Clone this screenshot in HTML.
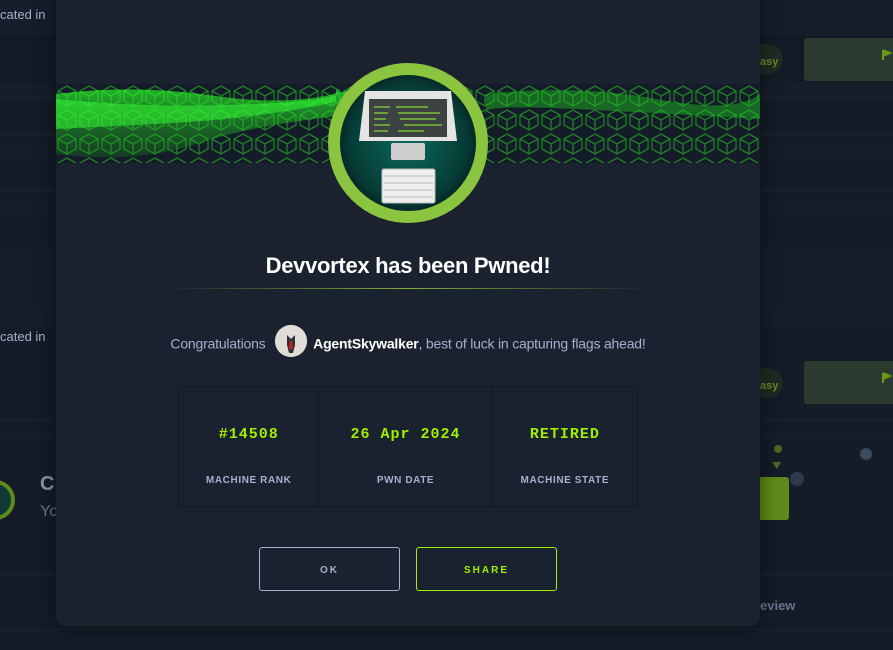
<!DOCTYPE html>
<html><head><meta charset="utf-8"><style>
*{margin:0;padding:0;box-sizing:border-box}
body{width:893px;height:650px;overflow:hidden;background:#151c28;font-family:"Liberation Sans",sans-serif;position:relative}
.bg{position:absolute;left:0;top:0;width:893px;height:650px}
.modal{position:absolute;left:56px;top:0;width:704px;height:626px;background:#1a2230;border-radius:0 0 10px 10px;box-shadow:0 0 20px rgba(0,0,0,.5);overflow:hidden}
.banner{position:absolute;left:0;top:84px;width:704px;height:79px;background:#151c29}
h1{position:absolute;top:253px;width:100%;text-align:center;color:#fff;font-size:22px;font-weight:bold;letter-spacing:-0.3px}
.line{position:absolute;left:109px;top:288px;width:486px;height:1px;background:linear-gradient(90deg,transparent,#7fae3a 50%,transparent)}
.cg{position:absolute;top:333px;width:100%;text-align:center;color:#a4b1cd;font-size:14px;letter-spacing:-0.2px}
.cg b{color:#fff}
.av{display:inline-block;width:32px;height:32px;border-radius:50%;background:#ddd;vertical-align:middle;margin:-8px 6px 0 6px;position:relative;overflow:hidden}
.tbl{position:absolute;left:122px;top:386px;width:460px;height:121px;border:1px solid #111826;display:flex}
.c{border-right:1px solid #111826;text-align:center;position:relative}
.c:last-child{border-right:0}
.v{position:absolute;top:39px;width:100%;color:#9fef00;font-family:"Liberation Mono",monospace;font-weight:bold;font-size:15px;letter-spacing:1px}
.l{position:absolute;top:88px;width:100%;color:#a4b1cd;font-size:10px;font-weight:bold;letter-spacing:.6px}
.btn{position:absolute;top:547px;width:141px;height:44px;border:1px solid #a4b1cd;border-radius:3px;text-align:center;line-height:46px;font-size:10px;font-weight:bold;letter-spacing:2px;color:#a4b1cd}
</style></head><body>
<svg class="bg" width="893" height="650">
<rect x="0" y="0" width="893" height="36" fill="#161d2a"/>
<rect x="0" y="36" width="893" height="46" fill="#131a26"/>
<rect x="0" y="82" width="893" height="15" fill="#161d2a"/>
<line x1="0" y1="97" x2="893" y2="97" stroke="#1c2432"/>
<line x1="0" y1="135" x2="893" y2="135" stroke="#1c2432"/>
<line x1="0" y1="152" x2="893" y2="152" stroke="#1c2432"/>
<line x1="0" y1="191" x2="893" y2="191" stroke="#1c2432"/>
<line x1="0" y1="208" x2="893" y2="208" stroke="#1c2432"/>
<rect x="0" y="247" width="893" height="60" fill="#161d2a"/>
<rect x="0" y="307" width="893" height="20" fill="#161e2c"/>
<text x="0" y="19" fill="#a4b1cd" font-size="13" font-family="Liberation Sans">cated in</text>
<text x="0" y="341" fill="#a4b1cd" font-size="13" font-family="Liberation Sans">cated in</text>
<rect x="740" y="38" width="56" height="43" rx="4" fill="#141b27"/>
<rect x="730" y="44" width="53" height="30" rx="15" fill="#1f2a23"/>
<text x="760" y="65" fill="#6a8a26" font-size="11" font-weight="bold" font-family="Liberation Sans">asy</text>
<rect x="804" y="38" width="100" height="43" rx="3" fill="#2b3a2e"/>
<rect x="740" y="361" width="56" height="43" rx="4" fill="#141b27"/>
<rect x="730" y="368" width="53" height="30" rx="15" fill="#1f2a23"/>
<text x="760" y="389" fill="#6a8a26" font-size="11" font-weight="bold" font-family="Liberation Sans">asy</text>
<rect x="804" y="361" width="100" height="43" rx="3" fill="#2b3a2e"/>
<path d="M883 50v10M883 50l7 3-7 3" stroke="#6a9a1a" stroke-width="2" fill="#6a9a1a"/>
<path d="M883 373v10M883 373l7 3-7 3" stroke="#6a9a1a" stroke-width="2" fill="#6a9a1a"/>
<line x1="0" y1="420" x2="893" y2="420" stroke="#1c2432"/>
<line x1="0" y1="437" x2="893" y2="437" stroke="#1c2432"/>
<rect x="740" y="477" width="49" height="43" rx="3" fill="#5e8c1a"/>
<circle cx="778" cy="449" r="4" fill="#4a6a1f"/>
<circle cx="866" cy="454" r="6" fill="#3d4a5e"/>
<circle cx="797" cy="479" r="7" fill="#2d3a4e"/>
<path d="M772 462l9 0-4 7z" fill="#4a6a1f"/>
<text x="40" y="490" fill="#8a95ab" font-size="20" font-weight="bold" font-family="Liberation Sans">C</text>
<text x="40" y="516" fill="#6a7590" font-size="16" font-family="Liberation Sans">Yo</text>
<circle cx="-5" cy="500" r="18" fill="#0f3a38" stroke="#5e8c1a" stroke-width="4"/>
<line x1="0" y1="575" x2="893" y2="575" stroke="#1c2432"/>
<line x1="0" y1="630" x2="893" y2="630" stroke="#1c2432"/>
<text x="760" y="610" fill="#6a7590" font-size="13" font-weight="bold" font-family="Liberation Sans">eview</text>
</svg>
<div class="modal">
<div class="banner">
<svg width="704" height="79">
<defs>
<pattern id="cube" width="22" height="24" patternUnits="userSpaceOnUse">
<path d="M11 2l9 5v10l-9 5-9-5V7z M2 7l9 5 9-5 M11 12v10" fill="none" stroke="#1f8a25" stroke-width="1.3"/>
</pattern>
<linearGradient id="g" x1="0" y1="0" x2="0" y2="1"><stop offset="0" stop-color="#2bff2b" stop-opacity=".9"/><stop offset="1" stop-color="#1aa21a" stop-opacity=".3"/></linearGradient>
</defs>
<rect width="704" height="79" fill="url(#cube)" opacity=".9"/>
<path d="M0 10 Q80 0 160 12 T300 4 L300 30 Q200 40 140 60 T0 70z" fill="url(#g)" opacity=".75"/>
<path d="M0 15 Q100 25 200 20 T280 5 L280 18 Q200 35 100 40 T0 45z" fill="#36ff36" opacity=".5"/>
<path d="M430 10 Q520 0 600 15 T704 10 L704 35 Q620 30 520 25 T430 30z" fill="#1fc41f" opacity=".45"/>
</svg>
</div>
<svg style="position:absolute;left:272px;top:63px" width="160" height="160" viewBox="0 0 160 160">
<defs><radialGradient id="t" cx=".5" cy=".5" r=".5"><stop offset="0" stop-color="#0c6a5e"/><stop offset=".8" stop-color="#063a34"/><stop offset="1" stop-color="#041e1e"/></radialGradient></defs>
<circle cx="80" cy="80" r="74" fill="url(#t)" stroke="#8bc43f" stroke-width="12"/>
<path d="M37 28h86l6 50H31z" fill="#e4e4e4"/>
<rect x="41" y="36" width="78" height="38" fill="#3d4242"/>
<g stroke="#7bbf3a" stroke-width="1.5">
<line x1="46" y1="44" x2="62" y2="44"/><line x1="68" y1="44" x2="100" y2="44"/><line x1="46" y1="50" x2="60" y2="50"/><line x1="70" y1="50" x2="112" y2="50"/><line x1="46" y1="56" x2="58" y2="56"/><line x1="72" y1="56" x2="108" y2="56"/><line x1="46" y1="62" x2="62" y2="62"/><line x1="76" y1="62" x2="114" y2="62"/><line x1="46" y1="68" x2="60" y2="68"/><line x1="70" y1="68" x2="96" y2="68"/></g>
<rect x="63" y="80" width="34" height="17" rx="2" fill="#cfcfcf"/>
<rect x="54" y="106" width="53" height="34" rx="2" fill="#eee" stroke="#bbb"/>
<g stroke="#bbb" stroke-width="1"><line x1="56" y1="113" x2="105" y2="113"/><line x1="56" y1="120" x2="105" y2="120"/><line x1="56" y1="127" x2="105" y2="127"/><line x1="56" y1="134" x2="105" y2="134"/></g>
</svg>
<h1>Devvortex has been Pwned!</h1>
<div class="line"></div>
<div class="cg">Congratulations <span class="av"><svg width="32" height="32"><rect width="32" height="32" fill="#e0dcd8"/><path d="M12 10l4 4 4-4v10l-2 8h-4l-2-8z" fill="#333"/><path d="M15 16h2l1 8h-4z" fill="#c22"/></svg></span><b>AgentSkywalker</b>, best of luck in capturing flags ahead!</div>
<div class="tbl">
<div class="c" style="width:141px"><div class="v">#14508</div><div class="l">MACHINE RANK</div></div>
<div class="c" style="width:174px"><div class="v">26 Apr 2024</div><div class="l">PWN DATE</div></div>
<div class="c" style="width:145px"><div class="v">RETIRED</div><div class="l">MACHINE STATE</div></div>
</div>
<div class="btn" style="left:203px">OK</div>
<div class="btn" style="left:360px;border-color:#9fef00;color:#9fef00">SHARE</div>
</div>
</body></html>
